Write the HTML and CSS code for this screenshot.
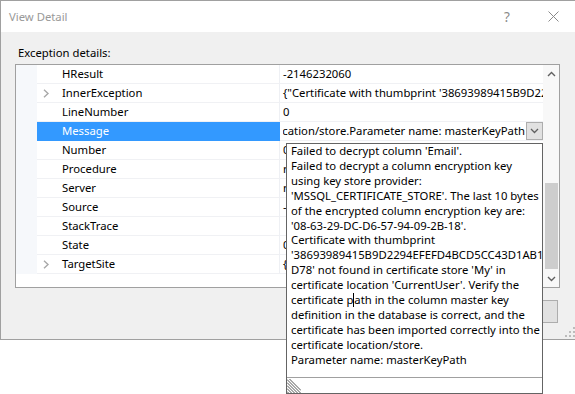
FILE: index.html
```html
<!DOCTYPE html>
<html lang="en">
<head>
    <meta charset="UTF-8">
    <meta name="viewport" content="width=device-width, initial-scale=1.0">
    <title>View Detail</title>
    <link rel="stylesheet" href="styles.css">
</head>
<body>
    <div class="dialog">
        <div class="titlebar">
            <span class="title">View Detail</span>
            <span class="caption-btn help">?</span>
            <span class="caption-btn">
                <svg width="11" height="11" viewBox="0 0 11 11"><path d="M0.5 0.5 L10.5 10.5 M10.5 0.5 L0.5 10.5" stroke="#8a8a8a" stroke-width="1" fill="none"/></svg>
            </span>
        </div>

        <div class="content">
            <div class="label">Exception details:</div>

            <!-- Property grid -->
            <div class="grid">
                <div class="rows">
                    <div class="row">
                        <div class="gutter"></div>
                        <div class="name"><span class="toggle"></span>HResult</div>
                        <div class="value">-2146232060</div>
                    </div>
                    <div class="row">
                        <div class="gutter"></div>
                        <div class="name"><span class="toggle"><svg width="7" height="9" viewBox="0 0 7 9"><polyline points="1,0.8 5,4.5 1,8.2" stroke="#a8a8a8" stroke-width="1.4" fill="none"/></svg></span>InnerException</div>
                        <div class="value">{"Certificate with thumbprint '38693989415B9D2294EFEFD4BCD5CC43D1AB1D78'</div>
                    </div>
                    <div class="row">
                        <div class="gutter"></div>
                        <div class="name"><span class="toggle"></span>LineNumber</div>
                        <div class="value">0</div>
                    </div>
                    <div class="row selected">
                        <div class="gutter"></div>
                        <div class="name"><span class="toggle"></span>Message</div>
                        <div class="value combo">
                            <div class="combo-text"><span>location/store.Parameter name: masterKeyPath</span></div>
                            <div class="drop">
                                <svg width="9" height="6" viewBox="0 0 9 6"><polyline points="1,1 4.5,4.5 8,1" stroke="#606060" stroke-width="1.3" fill="none"/></svg>
                            </div>
                        </div>
                    </div>
                    <div class="row">
                        <div class="gutter"></div>
                        <div class="name"><span class="toggle"></span>Number</div>
                        <div class="value">0</div>
                    </div>
                    <div class="row">
                        <div class="gutter"></div>
                        <div class="name"><span class="toggle"></span>Procedure</div>
                        <div class="value">n</div>
                    </div>
                    <div class="row">
                        <div class="gutter"></div>
                        <div class="name"><span class="toggle"></span>Server</div>
                        <div class="value">n</div>
                    </div>
                    <div class="row">
                        <div class="gutter"></div>
                        <div class="name"><span class="toggle"></span>Source</div>
                        <div class="value">-</div>
                    </div>
                    <div class="row">
                        <div class="gutter"></div>
                        <div class="name"><span class="toggle"></span>StackTrace</div>
                        <div class="value"></div>
                    </div>
                    <div class="row">
                        <div class="gutter"></div>
                        <div class="name"><span class="toggle"></span>State</div>
                        <div class="value">0</div>
                    </div>
                    <div class="row">
                        <div class="gutter"></div>
                        <div class="name"><span class="toggle"><svg width="7" height="9" viewBox="0 0 7 9"><polyline points="1,0.8 5,4.5 1,8.2" stroke="#a8a8a8" stroke-width="1.4" fill="none"/></svg></span>TargetSite</div>
                        <div class="value">{Void}</div>
                    </div>
                </div>

                <div class="scrollbar">
                    <div class="sb-btn">
                        <svg width="9" height="6" viewBox="0 0 9 6"><polyline points="1,5 4.5,1.5 8,5" stroke="#606060" stroke-width="1.4" fill="none"/></svg>
                    </div>
                    <div class="sb-track"><div class="sb-thumb"></div></div>
                    <div class="sb-btn">
                        <svg width="9" height="6" viewBox="0 0 9 6"><polyline points="1,1 4.5,4.5 8,1" stroke="#606060" stroke-width="1.4" fill="none"/></svg>
                    </div>
                </div>
            </div>

            <div class="footer">
                <div class="button">OK</div>
            </div>
        </div>

        <svg class="size-grip" width="12" height="12" viewBox="0 0 12 12">
            <rect x="9" y="1" width="2" height="2" fill="#bcbcbc"/>
            <rect x="5" y="5" width="2" height="2" fill="#bcbcbc"/>
            <rect x="9" y="5" width="2" height="2" fill="#bcbcbc"/>
            <rect x="1" y="9" width="2" height="2" fill="#bcbcbc"/>
            <rect x="5" y="9" width="2" height="2" fill="#bcbcbc"/>
            <rect x="9" y="9" width="2" height="2" fill="#bcbcbc"/>
        </svg>
    </div>

    <!-- Drop-down editor for the Message value -->
    <div class="popup">
        <div class="popup-text">
            Failed to decrypt column 'Email'.<br>
            Failed to decrypt a column encryption key<br>
            using key store provider:<br>
            'MSSQL_CERTIFICATE_STORE'. The last 10 bytes<br>
            of the encrypted column encryption key are:<br>
            '08-63-29-DC-D6-57-94-09-2B-18'.<br>
            Certificate with thumbprint<br>
            '38693989415B9D2294EFEFD4BCD5CC43D1AB1<br>
            D78' not found in certificate store 'My' in<br>
            certificate location 'CurrentUser'. Verify the<br>
            certificate p<span class="caret"></span>ath in the column master key<br>
            definition in the database is correct, and the<br>
            certificate has been imported correctly into the<br>
            certificate location/store.<br>
            Parameter name: masterKeyPath
        </div>
        <div class="popup-foot">
            <svg width="14" height="14" viewBox="0 0 14 14">
                <path d="M0 0.5 L13.5 14 M0 3.5 L10.5 14 M0 6.5 L7.5 14 M0 9.5 L4.5 14 M0 12.5 L1.5 14 M2.5 0 L14 11.5" stroke="#555" stroke-width="1" fill="none"/>
            </svg>
        </div>
    </div>
</body>
</html>
```

FILE: styles.css
```css
* {
    box-sizing: border-box;
}
body {
    margin: 0;
    height: 394px;
    overflow: hidden;
    background-color: white;
    color: black;
    font-family: "Noto Sans", "Open Sans", sans-serif;
    font-size: 11.3px;
}
.dialog {
    position: relative;
    width: 577px;
    height: 340px;
    border: 1px solid #a0a0a0;
    background-color: #f0f0f0;
}
.titlebar {
    height: 31px;
    background-color: white;
    display: flex;
    align-items: center;
}
.title {
    flex: 1;
    padding-left: 8px;
    color: #999;
}
.caption-btn {
    width: 46px;
    height: 31px;
    display: flex;
    align-items: center;
    justify-content: center;
}
.help {
    color: #8a8a8a;
    font-size: 13.5px;
    padding-top: 1px;
}
.content {
    padding: 13px 0 0 14px;
}
.label {
    margin-left: 3px;
    line-height: 15px;
}
.grid {
    margin-top: 4px;
    width: 545px;
    height: 224px;
    border: 1px solid #a0a0a0;
    background-color: white;
    display: flex;
}
.rows {
    flex: 1;
    min-width: 0;
}
.row {
    display: flex;
    height: 19px;
    line-height: 18px;
}
.gutter {
    width: 21px;
    background-color: #f6f8fb;
}
.name {
    width: 243px;
    display: flex;
    align-items: center;
    padding-left: 6px;
    border-right: 1px solid #eef0f4;
    border-bottom: 1px solid #f0f1f4;
    white-space: nowrap;
}
.toggle {
    width: 19px;
    height: 9px;
    display: flex;
}
.value {
    flex: 1;
    min-width: 0;
    padding-left: 3px;
    border-bottom: 1px solid #f0f1f4;
    white-space: nowrap;
    overflow: hidden;
}
.selected .name {
    background-color: #3399ff;
    border-right-color: #3399ff;
    border-bottom-color: #3399ff;
    color: white;
}
.combo {
    display: flex;
    align-items: center;
}
.combo-text {
    flex: 1;
    min-width: 0;
    overflow: hidden;
    display: flex;
    justify-content: flex-end;
    padding-right: 1px;
}
.combo-text span {
    flex-shrink: 0;
}
.drop {
    width: 17px;
    height: 18px;
    border: 1px solid #adadad;
    background-color: #e1e1e1;
    display: flex;
    align-items: center;
    justify-content: center;
}
.scrollbar {
    width: 16px;
    background-color: #f8f8f8;
    display: flex;
    flex-direction: column;
}
.sb-btn {
    height: 17px;
    display: flex;
    align-items: center;
    justify-content: center;
}
.sb-track {
    flex: 1;
}
.sb-thumb {
    margin: 101px 1px 0 2px;
    height: 86px;
    background-color: #cdcdcd;
}
.footer {
    display: flex;
    justify-content: flex-end;
    padding-right: 18px;
    margin-top: 12px;
}
.button {
    width: 75px;
    height: 23px;
    border: 1px solid #adadad;
    background-color: #e1e1e1;
    text-align: center;
    line-height: 21px;
}
.size-grip {
    position: absolute;
    right: 0;
    bottom: 1px;
}
.popup {
    position: absolute;
    left: 286px;
    top: 143px;
    width: 257px;
    height: 251px;
    border: 1px solid #646464;
    background-color: white;
    display: flex;
    flex-direction: column;
}
.popup-text {
    flex: 1;
    padding: 0 0 0 4px;
    line-height: 14.9px;
    white-space: nowrap;
    overflow: hidden;
}
.caret {
    display: inline-block;
    width: 1px;
    height: 14px;
    background-color: black;
    vertical-align: -3px;
}
.popup-foot {
    height: 16px;
    border-top: 1px solid #a0a0a0;
    padding-top: 1px;
}
.popup-foot svg {
    display: block;
}
```
